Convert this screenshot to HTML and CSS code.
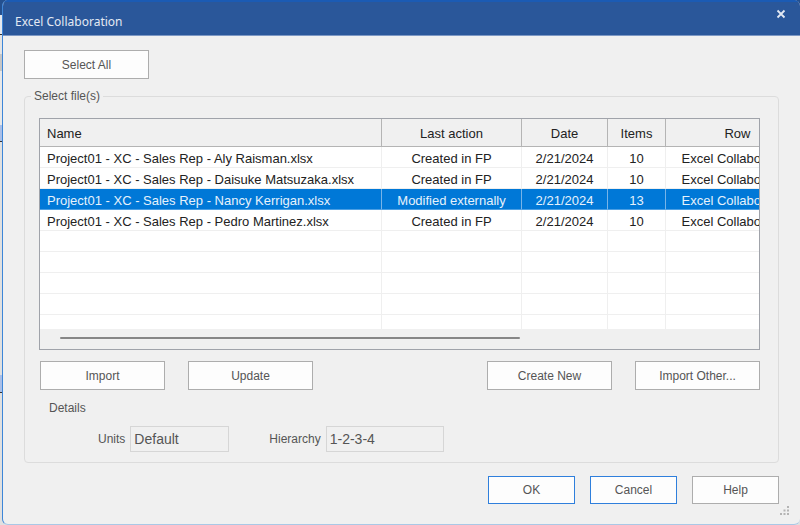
FILE: index.html
```html
<!DOCTYPE html>
<html lang="en">
<head>
  <meta charset="UTF-8">
  <meta name="viewport" content="width=device-width, initial-scale=1.0">
  <title>Excel Collaboration</title>
  <link rel="stylesheet" href="styles.css">
</head>
<body>
  <div class="dialog">
    <header class="titlebar">
      <h1>Excel Collaboration</h1>
      <button type="button" class="close" aria-label="Close">
        <svg width="10" height="10" viewBox="0 0 10 10">
          <path d="M1.5 1.5L8.5 8.5M8.5 1.5L1.5 8.5" stroke="currentColor" stroke-width="1.8"/>
        </svg>
      </button>
    </header>

    <form class="content">
      <button type="button" class="btn">Select All</button>

      <fieldset class="group">
        <legend>Select file(s)</legend>

        <div class="list">
          <div class="rows">
            <table>
              <colgroup>
                <col class="col-name">
                <col class="col-action">
                <col class="col-date">
                <col class="col-items">
                <col class="col-row">
              </colgroup>
              <thead>
                <tr><th>Name</th><th>Last action</th><th>Date</th><th>Items</th><th>Row</th></tr>
              </thead>
              <tbody>
                <tr><td>Project01 - XC - Sales Rep - Aly Raisman.xlsx</td><td>Created in FP</td><td>2/21/2024</td><td>10</td><td>Excel Collaboration</td></tr>
                <tr><td>Project01 - XC - Sales Rep - Daisuke Matsuzaka.xlsx</td><td>Created in FP</td><td>2/21/2024</td><td>10</td><td>Excel Collaboration</td></tr>
                <tr class="selected"><td>Project01 - XC - Sales Rep - Nancy Kerrigan.xlsx</td><td>Modified externally</td><td>2/21/2024</td><td>13</td><td>Excel Collaboration</td></tr>
                <tr><td>Project01 - XC - Sales Rep - Pedro Martinez.xlsx</td><td>Created in FP</td><td>2/21/2024</td><td>10</td><td>Excel Collaboration</td></tr>
                <tr><td></td><td></td><td></td><td></td><td></td></tr>
                <tr><td></td><td></td><td></td><td></td><td></td></tr>
                <tr><td></td><td></td><td></td><td></td><td></td></tr>
                <tr><td></td><td></td><td></td><td></td><td></td></tr>
                <tr class="last"><td></td><td></td><td></td><td></td><td></td></tr>
              </tbody>
            </table>
          </div>
          <div class="scrollbar"><div class="thumb"></div></div>
        </div>

        <div class="actions">
          <button type="button" class="btn">Import</button>
          <button type="button" class="btn">Update</button>
          <button type="button" class="btn push">Create New</button>
          <button type="button" class="btn">Import Other...</button>
        </div>

        <fieldset class="details">
          <legend>Details</legend>
          <div class="fields">
            <label for="units">Units</label>
            <input type="text" id="units" class="units" value="Default" readonly>
            <label for="hierarchy" class="second">Hierarchy</label>
            <input type="text" id="hierarchy" class="hierarchy" value="1-2-3-4" readonly>
          </div>
        </fieldset>
      </fieldset>

      <div class="footer">
        <button type="button" class="btn small primary">OK</button>
        <button type="button" class="btn small primary">Cancel</button>
        <button type="button" class="btn small">Help</button>
      </div>
    </form>

    <svg class="grip" width="10" height="10" viewBox="0 0 10 10" fill="#b4b4b4">
      <path d="M7 0h2v2h-2zM7 3.5h2v2h-2zM3.5 3.5h2v2h-2zM0 7h2v2h-2zM3.5 7h2v2h-2zM7 7h2v2h-2z"/>
    </svg>
  </div>
</body>
</html>
```

FILE: styles.css
```css
* {
  box-sizing: border-box;
}
body {
  margin: 0;
  padding-left: 2px;
  min-height: 100vh;
  display: flex;
  font-family: "Liberation Sans", Arial, sans-serif;
  font-size: 12px;
  color: #555;
  /* edge of the window behind the dialog */
  background: linear-gradient(#24508f 15px, #e6e9ee 15px, #e6e9ee 34px, #333 34px, #333 35px,
    #e4e4e4 35px, #e4e4e4 54px, #c6c6c6 54px, #c6c6c6 71px, #e8e8e8 71px, #e8e8e8 125px,
    #a9bfe8 125px, #a9bfe8 141px, #333 141px, #333 142px, #e0e0e0 142px, #e0e0e0 375px,
    #a9bfe8 375px, #a9bfe8 392px, #333 392px, #333 393px, #e0e0e0 393px);
}
.dialog {
  position: relative;
  flex: 1;
  display: flex;
  flex-direction: column;
  background: #f0f0f0;
  border-left: 1px solid #3d86d8;
  border-bottom: 1px solid #a9c8e6;
  border-radius: 6px;
  overflow: hidden;
}
.titlebar {
  display: flex;
  justify-content: space-between;
  align-items: flex-start;
  height: 36px;
  padding: 7px 14px 0 12px;
  background: #2a579a;
  border-top: 2px solid #1b5bb4;
  border-bottom: 1px solid #7d98c4;
  color: #e3e9f3;
}
h1 {
  margin: 5px 0 0;
  font-family: "Noto Sans", sans-serif;
  font-size: 12px;
  line-height: 16px;
  font-weight: 400;
}
.close {
  display: flex;
  padding: 0;
  border: 0;
  background: none;
  color: #e3e9f3;
}
.content {
  padding: 14px 21px 20px 21px;
}
.btn {
  width: 125px;
  height: 29px;
  padding: 0;
  background: #fdfdfd;
  border: 1px solid #adadad;
  color: #555;
  font: inherit;
}
.small {
  width: 87px;
  height: 28px;
}
.primary {
  border-color: #2f7fdc;
}
fieldset {
  min-width: 0;
  margin: 0;
  padding: 0;
  border: 0;
}
legend {
  line-height: 16px;
}
.group {
  margin-top: 9px;
  padding: 14px 18px 10px 14px;
  border: 1px solid #dcdcdc;
  border-radius: 4px;
}
.group > legend {
  margin-left: -8px;
  padding: 0 3px;
}
.list {
  border: 1px solid #a0a3aa;
  background: #fff;
}
.rows {
  overflow: hidden;
}
table {
  width: 770px;
  table-layout: fixed;
  border-collapse: separate;
  border-spacing: 0;
  font-size: 13px;
  color: #222;
}
.col-name {
  width: 342px;
}
.col-action {
  width: 140px;
}
.col-date {
  width: 86px;
}
.col-items {
  width: 58px;
}
.col-row {
  width: 144px;
}
th,
td {
  padding: 2px 0 0;
  text-align: center;
  white-space: nowrap;
  border-right: 1px solid #efefef;
  border-bottom: 1px solid #efefef;
}
th {
  height: 28px;
  font-weight: 400;
  background: #f0f0f0;
  border-right: 1px solid #b4b4b4;
  border-bottom: 1px solid #b4b4b4;
}
td {
  height: 21px;
}
th:first-child,
td:first-child {
  padding-left: 7px;
  text-align: left;
}
.selected td {
  background: #0078d7;
  color: #e6f2fc;
  border-right-color: #78b4e8;
  border-bottom-color: #4b9fe4;
}
.last td {
  height: 14px;
  border-bottom: 0;
}
.scrollbar {
  height: 20px;
  padding: 8px 239px 0 20px;
  background: #f0f0f0;
}
.thumb {
  height: 2px;
  border-radius: 1px;
  background: #868686;
}
.actions {
  display: flex;
  gap: 23px;
  margin: 11px 0 0 1px;
}
.push {
  margin-left: auto;
}
.details {
  margin-top: 10px;
}
.details legend {
  margin-left: 8px;
}
.fields {
  display: flex;
  align-items: center;
  gap: 5px;
  margin-top: 10px;
  padding-left: 59px;
}
input {
  height: 26px;
  padding: 0 3px;
  background: #f0f0f0;
  border: 1px solid #d6d6d6;
  color: #555;
  font: inherit;
  font-size: 14px;
}
.units {
  width: 99px;
}
.hierarchy {
  width: 118px;
}
.second {
  margin-left: 35px;
}
.footer {
  display: flex;
  justify-content: flex-end;
  gap: 15px;
  margin-top: 13px;
}
.grip {
  position: absolute;
  right: 10px;
  bottom: 8px;
}
```
